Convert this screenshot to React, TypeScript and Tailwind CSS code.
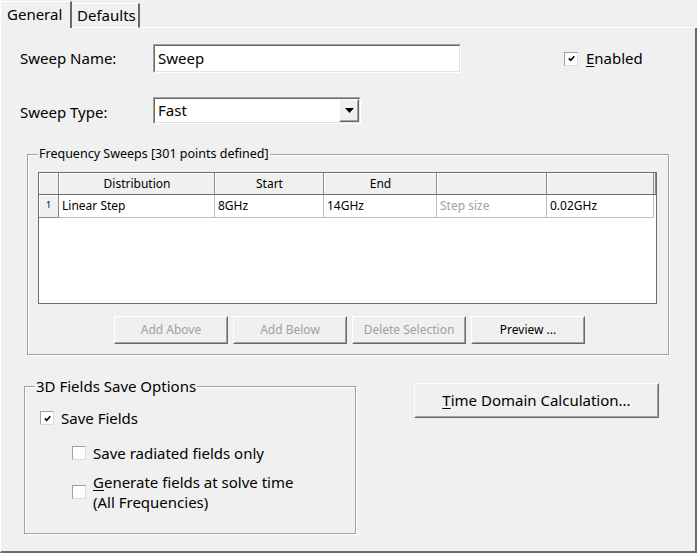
import React from "react";

const F = { fontFamily: '"Noto Sans", "Liberation Sans", sans-serif' };

function CheckBox({ checked }: { checked?: boolean }) {
  return (
    <span className="inline-flex w-[14px] h-[14px] shrink-0 bg-white border border-t-[#a0a0a0] border-l-[#a0a0a0] border-r-[#dcdcdc] border-b-[#dcdcdc] items-center justify-center">
      {checked && (
        <svg width="9" height="9" viewBox="0 0 9 9">
          <path d="M1.8 4.4 L3.7 6.3 L7.3 2.3" stroke="#000" strokeWidth="1.6" fill="none" />
        </svg>
      )}
    </span>
  );
}

function Btn({ children, disabled, className }: { children: React.ReactNode; disabled?: boolean; className?: string }) {
  return (
    <div className={"border border-t-white border-l-white border-r-[#696969] border-b-[#696969] bg-[#f0f0f0] " + (className || "")}>
      <div className={"w-full h-full border border-t-[#f0f0f0] border-l-[#f0f0f0] border-r-[#a0a0a0] border-b-[#a0a0a0] flex items-center justify-center " + (disabled ? "text-[#a0a0a0]" : "text-black")}>
        {children}
      </div>
    </div>
  );
}

function Sunken({ className, children }: { className?: string; children?: React.ReactNode }) {
  return (
    <div className={"border border-t-[#a0a0a0] border-l-[#a0a0a0] border-r-white border-b-white " + (className || "")}>
      <div className="w-full h-full border border-t-[#696969] border-l-[#696969] border-r-[#e3e3e3] border-b-[#e3e3e3] bg-white flex items-center">
        {children}
      </div>
    </div>
  );
}

function HeadCell({ w, children }: { w: string; children?: React.ReactNode }) {
  return (
    <div className={w + " h-full shrink-0 border-r border-r-[#8a8a8a]"}>
      <div className="w-full h-full border-l border-t border-l-white border-t-white flex items-center justify-center text-[12px]">
        {children}
      </div>
    </div>
  );
}

function DataCell({ w, children, gray }: { w: string; children?: React.ReactNode; gray?: boolean }) {
  return (
    <div className={w + " h-full shrink-0 border-r border-b border-[#c0c0c0] bg-white flex items-center pl-[3px] text-[12px] " + (gray ? "text-[#a0a0a0]" : "text-black")}>
      {children}
    </div>
  );
}

export default function App() {
  return (
    <div className="w-[697px] h-[553px] bg-[#f0f0f0] flex flex-col overflow-hidden text-black" style={F}>
      {/* tabs */}
      <div className="h-[28px] flex items-end shrink-0">
        <div className="w-[72px] h-[27px] border-l border-t border-white border-r-2 border-r-[#696969] flex items-start pt-[1px] pl-[6px] text-[15px] relative z-10 bg-[#f0f0f0]">
          General
        </div>
        <div className="w-[68px] h-[25px] border-t border-t-white border-r-2 border-r-[#696969] border-b border-b-white flex items-center pl-[5px] text-[15px]">
          Defaults
        </div>
        <div className="flex-1 h-[24px] border-b border-b-white" />
      </div>
      {/* panel */}
      <div className="flex-1 border-l border-l-white border-r-2 border-r-[#696969] border-b-2 border-b-[#696969] flex flex-col">
        {/* row 1 */}
        <div className="flex items-center mt-[16px] ml-[19px] h-[29px]">
          <div className="w-[133px] text-[15px]">Sweep Name:</div>
          <Sunken className="w-[308px] h-[29px]">
            <span className="pl-[3px] text-[15px]">Sweep</span>
          </Sunken>
          <div className="ml-[103px] flex items-center">
            <CheckBox checked />
            <span className="ml-[8px] text-[15px]"><span className="underline underline-offset-2">E</span>nabled</span>
          </div>
        </div>
        {/* row 2 */}
        <div className="flex items-center mt-[24px] ml-[19px] h-[27px]">
          <div className="w-[133px] text-[15px] pt-[3px]">Sweep Type:</div>
          <Sunken className="w-[208px] h-[27px]">
            <span className="pl-[3px] text-[15px] flex-1">Fast</span>
            <Btn className="w-[20px] h-[23px]">
              <svg width="9" height="5" viewBox="0 0 9 5"><path d="M0 0 L9 0 L4.5 5 Z" fill="#000" /></svg>
            </Btn>
          </Sunken>
        </div>
        {/* frequency sweeps group */}
        <div className="relative mt-[30px] ml-[26px] w-[642px] h-[201px] border border-[#a0a0a0] shadow-[inset_1px_1px_0_#fff,1px_1px_0_#fff] flex flex-col">
          <div className="absolute left-[10px] top-[-10px] px-[1px] bg-[#f0f0f0] text-[12.5px] leading-[18px]">
            Frequency Sweeps [301 points defined]
          </div>
          <div className="mt-[17px] ml-[10px] w-[619px] h-[132px] border border-[#6d6d6d] bg-white flex flex-col">
            <div className="h-[22px] flex bg-[#f0f0f0] border-b border-b-[#6d6d6d]">
              <HeadCell w="w-[20px]" />
              <HeadCell w="w-[156px]">Distribution</HeadCell>
              <HeadCell w="w-[109px]">Start</HeadCell>
              <HeadCell w="w-[113px]">End</HeadCell>
              <HeadCell w="w-[110px]" />
              <HeadCell w="w-[107px]" />
              <div className="w-[2px] h-full border-r border-r-[#8a8a8a]" />
            </div>
            <div className="h-[23px] flex">
              <div className="w-[20px] h-full shrink-0 bg-[#f0f0f0] border-r border-b border-r-[#8a8a8a] border-b-[#8a8a8a]">
                <div className="w-full h-full border-l border-t border-white text-[9px] leading-none pl-[6px] pt-[4px]">1</div>
              </div>
              <DataCell w="w-[156px]">Linear Step</DataCell>
              <DataCell w="w-[109px]">8GHz</DataCell>
              <DataCell w="w-[113px]">14GHz</DataCell>
              <DataCell w="w-[110px]" gray>Step size</DataCell>
              <DataCell w="w-[107px]">0.02GHz</DataCell>
            </div>
          </div>
          <div className="flex mt-[12px] ml-[86px] gap-[5px] text-[12px]">
            <Btn disabled className="w-[114px] h-[28px]">Add Above</Btn>
            <Btn disabled className="w-[114px] h-[28px]">Add Below</Btn>
            <Btn disabled className="w-[114px] h-[28px]">Delete Selection</Btn>
            <Btn className="w-[114px] h-[28px]">Preview ...</Btn>
          </div>
        </div>
        {/* bottom row */}
        <div className="flex items-start mt-[28px]">
          <div className="relative mt-[3px] ml-[23px] w-[332px] h-[148px] border border-[#a0a0a0] shadow-[inset_1px_1px_0_#fff,1px_1px_0_#fff] flex flex-col text-[15px]">
            <div className="absolute left-[10px] top-[-12px] px-[1px] bg-[#f0f0f0] leading-[22px]">
              3D Fields Save Options
            </div>
            <div className="flex items-center mt-[23px] ml-[15px] h-[16px]">
              <CheckBox checked />
              <span className="ml-[7px]">Save Fields</span>
            </div>
            <div className="flex items-center mt-[19px] ml-[47px] h-[16px]">
              <CheckBox />
              <span className="ml-[7px]">Save radiated fields only</span>
            </div>
            <div className="flex items-center mt-[11px] ml-[47px]">
              <CheckBox />
              <span className="ml-[7px] leading-[20px]">
                <span className="underline underline-offset-2">G</span>enerate fields at solve time<br />(All Frequencies)
              </span>
            </div>
          </div>
          <Btn className="ml-[58px] w-[245px] h-[35px] text-[15px]">
            <span><span className="underline underline-offset-2">T</span>ime Domain Calculation...</span>
          </Btn>
        </div>
      </div>
    </div>
  );
}
